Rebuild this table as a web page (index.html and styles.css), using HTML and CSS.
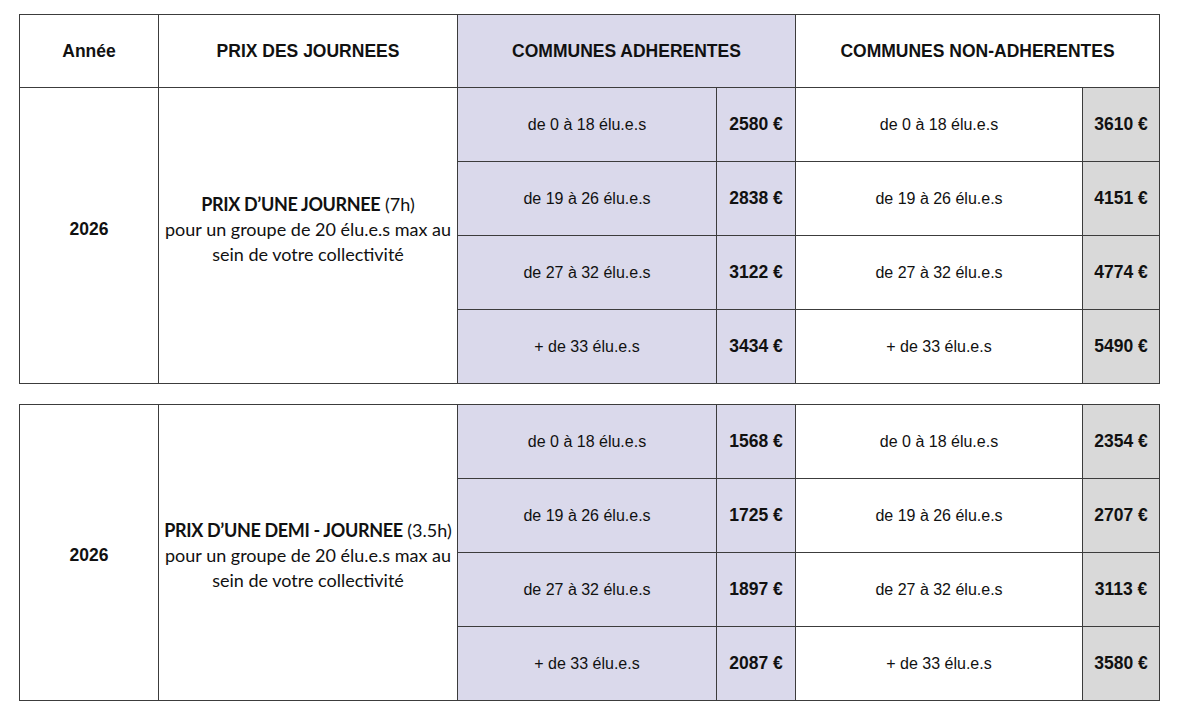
FILE: index.html
```html
<!DOCTYPE html>
<html lang="fr">
<head>
<meta charset="utf-8">
<title>Tarifs</title>
<link rel="stylesheet" href="styles.css">
</head>
<body>
<div class="page">
  <table class="grid grid-day">
    <colgroup>
      <col class="c-year"><col class="c-label"><col class="c-range-a"><col class="c-price-a"><col class="c-range-n"><col class="c-price-n">
    </colgroup>
    <thead>
      <tr class="head">
        <th>Année</th>
        <th>PRIX DES JOURNEES</th>
        <th colspan="2" class="adh">COMMUNES ADHERENTES</th>
        <th colspan="2">COMMUNES NON-ADHERENTES</th>
      </tr>
    </thead>
    <tbody>
      <tr>
        <td rowspan="4" class="year">2026</td>
        <td rowspan="4" class="label"><b>PRIX D’UNE JOURNEE</b> (7h)<br>pour un groupe de 20 élu.e.s max au<br>sein de votre collectivité</td>
        <td class="range adh">de 0 à 18 élu.e.s</td><td class="price adh">2580 €</td>
        <td class="range">de 0 à 18 élu.e.s</td><td class="price non">3610 €</td>
      </tr>
      <tr>
        <td class="range adh">de 19 à 26 élu.e.s</td><td class="price adh">2838 €</td>
        <td class="range">de 19 à 26 élu.e.s</td><td class="price non">4151 €</td>
      </tr>
      <tr>
        <td class="range adh">de 27 à 32 élu.e.s</td><td class="price adh">3122 €</td>
        <td class="range">de 27 à 32 élu.e.s</td><td class="price non">4774 €</td>
      </tr>
      <tr>
        <td class="range adh">+ de 33 élu.e.s</td><td class="price adh">3434 €</td>
        <td class="range">+ de 33 élu.e.s</td><td class="price non">5490 €</td>
      </tr>
    </tbody>
  </table>

  <table class="grid grid-half">
    <colgroup>
      <col class="c-year"><col class="c-label"><col class="c-range-a"><col class="c-price-a"><col class="c-range-n"><col class="c-price-n">
    </colgroup>
    <tbody>
      <tr>
        <td rowspan="4" class="year">2026</td>
        <td rowspan="4" class="label"><b>PRIX D’UNE DEMI - JOURNEE</b> (3.5h)<br>pour un groupe de 20 élu.e.s max au<br>sein de votre collectivité</td>
        <td class="range adh">de 0 à 18 élu.e.s</td><td class="price adh">1568 €</td>
        <td class="range">de 0 à 18 élu.e.s</td><td class="price non">2354 €</td>
      </tr>
      <tr>
        <td class="range adh">de 19 à 26 élu.e.s</td><td class="price adh">1725 €</td>
        <td class="range">de 19 à 26 élu.e.s</td><td class="price non">2707 €</td>
      </tr>
      <tr>
        <td class="range adh">de 27 à 32 élu.e.s</td><td class="price adh">1897 €</td>
        <td class="range">de 27 à 32 élu.e.s</td><td class="price non">3113 €</td>
      </tr>
      <tr>
        <td class="range adh">+ de 33 élu.e.s</td><td class="price adh">2087 €</td>
        <td class="range">+ de 33 élu.e.s</td><td class="price non">3580 €</td>
      </tr>
    </tbody>
  </table>
</div>
</body>
</html>
```
FILE: styles.css
```css
html, body {
  margin: 0;
  padding: 0;
  background: #ffffff;
}
body {
  font-family: "Liberation Sans", Arial, sans-serif;
  color: #111111;
}
.page {
  padding: 14px 0 0 19px;
  display: flex;
  flex-direction: column;
  gap: 20px;
}
.grid {
  border-collapse: collapse;
  table-layout: fixed;
  width: 1140px;
}
.c-year { width: 139px; }
.c-label { width: 299px; }
.c-range-a { width: 259px; }
.c-price-a { width: 79px; }
.c-range-n { width: 287px; }
.c-price-n { width: 77px; }

.grid th, .grid td {
  border: 1px solid #3c3c3c;
  padding: 0;
  text-align: center;
  vertical-align: middle;
}
.head { height: 73px; }
.head th {
  font-size: 17.5px;
  font-weight: bold;
}
.grid tbody tr { height: 74px; }
.adh { background: #dad9eb; }
.non { background: #d9d9d9; }
.range {
  font-size: 16px;
}
.price {
  font-size: 17.5px;
  font-weight: bold;
}
.year {
  font-size: 17.5px;
  font-weight: bold;
}
.label {
  font-family: Lato, "Open Sans", sans-serif;
  font-size: 18px;
  line-height: 25px;
}
.label b {
  font-weight: bold;
  letter-spacing: -0.35px;
}
.grid-day .year, .grid-day .label { padding-bottom: 12px; }
.grid-half .year, .grid-half .label { padding-top: 6px; }
```
